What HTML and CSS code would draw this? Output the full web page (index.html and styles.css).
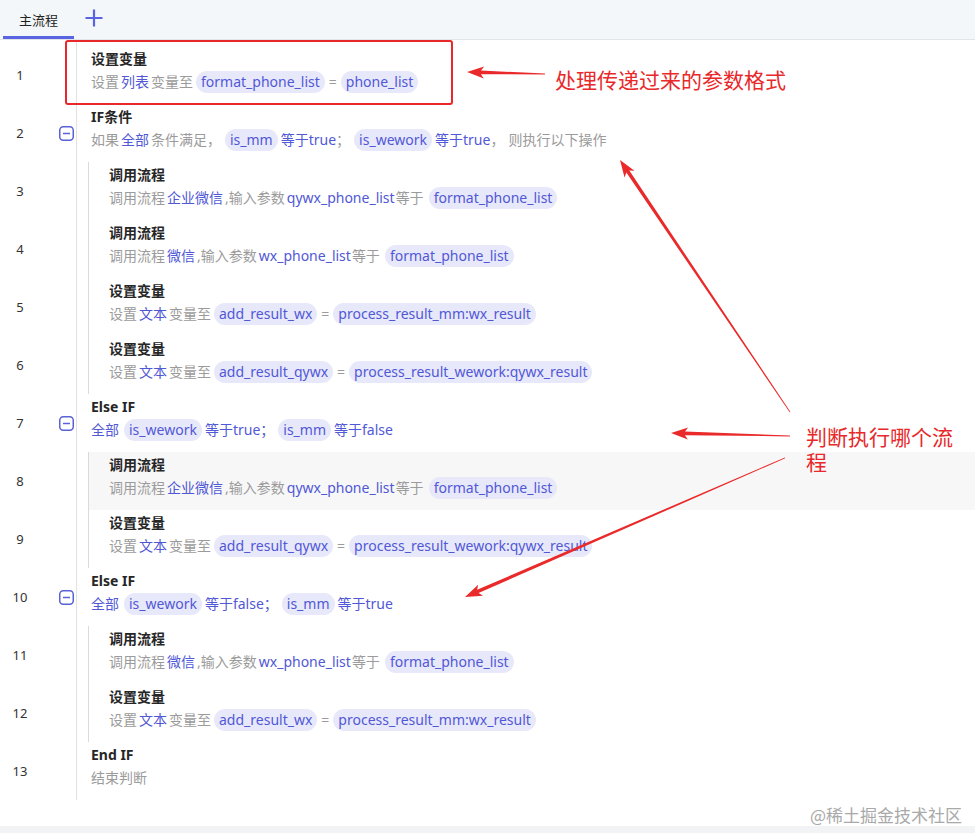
FILE: index.html
```html
<!DOCTYPE html>
<html lang="zh">
<head>
<meta charset="utf-8">
<title>主流程</title>
<link rel="stylesheet" href="styles.css">
</head>
<body>
<div class="page">
  <div class="tabs">
    <div class="tab active">主流程</div>
    <div class="add">
      <svg width="18" height="18" viewBox="0 0 18 18"><path d="M9 0.5v17M0.5 9h17" stroke="#5864e0" stroke-width="2.2" fill="none"/></svg>
    </div>
  </div>
  <div class="main">
    <div class="list">
      <div class="row">
        <div class="gutter"><span class="num">1</span></div>
        <div class="content l0">
          <div class="title">设置变量</div>
          <div class="desc">设置<span class="kw">列表</span>变量至<span class="chip">format_phone_list</span><span class="eq">=</span><span class="chip">phone_list</span></div>
        </div>
      </div>
      <div class="row">
        <div class="gutter"><span class="num">2</span><span class="toggle"><svg width="15" height="15" viewBox="0 0 15 15"><rect x="0.75" y="0.75" width="13.5" height="13.5" rx="3.5" fill="none" stroke="#5a62d8" stroke-width="1.5"/><path d="M4 7.5h7" stroke="#5a62d8" stroke-width="1.5"/></svg></span></div>
        <div class="content l0">
          <div class="title">IF条件</div>
          <div class="desc">如果<span class="kw">全部</span>条件满足，<span class="chip sp">is_mm</span><span class="kw0">等于true</span>；<span class="chip sp">is_wework</span><span class="kw0">等于true</span>，<span class="tail">则执行以下操作</span></div>
        </div>
      </div>
      <div class="row">
        <div class="gutter"><span class="num">3</span></div>
        <div class="content l1">
          <div class="title">调用流程</div>
          <div class="desc">调用流程<span class="kw">企业微信</span>,输入参数<span class="kw0 pad">qywx_phone_list</span>等于<span class="chip wide">format_phone_list</span></div>
        </div>
      </div>
      <div class="row">
        <div class="gutter"><span class="num">4</span></div>
        <div class="content l1">
          <div class="title">调用流程</div>
          <div class="desc">调用流程<span class="kw">微信</span>,输入参数<span class="kw0 pad">wx_phone_list</span>等于<span class="chip wide">format_phone_list</span></div>
        </div>
      </div>
      <div class="row">
        <div class="gutter"><span class="num">5</span></div>
        <div class="content l1">
          <div class="title">设置变量</div>
          <div class="desc">设置<span class="kw">文本</span>变量至<span class="chip">add_result_wx</span><span class="eq">=</span><span class="chip">process_result_mm:wx_result</span></div>
        </div>
      </div>
      <div class="row">
        <div class="gutter"><span class="num">6</span></div>
        <div class="content l1">
          <div class="title">设置变量</div>
          <div class="desc">设置<span class="kw">文本</span>变量至<span class="chip">add_result_qywx</span><span class="eq">=</span><span class="chip">process_result_wework:qywx_result</span></div>
        </div>
      </div>
      <div class="row">
        <div class="gutter"><span class="num">7</span><span class="toggle"><svg width="15" height="15" viewBox="0 0 15 15"><rect x="0.75" y="0.75" width="13.5" height="13.5" rx="3.5" fill="none" stroke="#5a62d8" stroke-width="1.5"/><path d="M4 7.5h7" stroke="#5a62d8" stroke-width="1.5"/></svg></span></div>
        <div class="content l0">
          <div class="title">Else IF</div>
          <div class="desc blue"><span class="kw first">全部</span><span class="chip">is_wework</span>等于true；<span class="chip sp">is_mm</span>等于false</div>
        </div>
      </div>
      <div class="row">
        <div class="gutter"><span class="num">8</span></div>
        <div class="content l1 hover">
          <div class="title">调用流程</div>
          <div class="desc">调用流程<span class="kw">企业微信</span>,输入参数<span class="kw0 pad">qywx_phone_list</span>等于<span class="chip wide">format_phone_list</span></div>
        </div>
      </div>
      <div class="row">
        <div class="gutter"><span class="num">9</span></div>
        <div class="content l1">
          <div class="title">设置变量</div>
          <div class="desc">设置<span class="kw">文本</span>变量至<span class="chip">add_result_qywx</span><span class="eq">=</span><span class="chip">process_result_wework:qywx_result</span></div>
        </div>
      </div>
      <div class="row">
        <div class="gutter"><span class="num">10</span><span class="toggle"><svg width="15" height="15" viewBox="0 0 15 15"><rect x="0.75" y="0.75" width="13.5" height="13.5" rx="3.5" fill="none" stroke="#5a62d8" stroke-width="1.5"/><path d="M4 7.5h7" stroke="#5a62d8" stroke-width="1.5"/></svg></span></div>
        <div class="content l0">
          <div class="title">Else IF</div>
          <div class="desc blue"><span class="kw first">全部</span><span class="chip">is_wework</span>等于false；<span class="chip sp">is_mm</span>等于true</div>
        </div>
      </div>
      <div class="row">
        <div class="gutter"><span class="num">11</span></div>
        <div class="content l1">
          <div class="title">调用流程</div>
          <div class="desc">调用流程<span class="kw">微信</span>,输入参数<span class="kw0 pad">wx_phone_list</span>等于<span class="chip wide">format_phone_list</span></div>
        </div>
      </div>
      <div class="row">
        <div class="gutter"><span class="num">12</span></div>
        <div class="content l1">
          <div class="title">设置变量</div>
          <div class="desc">设置<span class="kw">文本</span>变量至<span class="chip">add_result_wx</span><span class="eq">=</span><span class="chip">process_result_mm:wx_result</span></div>
        </div>
      </div>
      <div class="row">
        <div class="gutter"><span class="num">13</span></div>
        <div class="content l0">
          <div class="title">End IF</div>
          <div class="desc">结束判断</div>
        </div>
      </div>
    </div>
  </div>
  <div class="footer-strip"></div>

  <div class="anno-box"></div>
  <div class="anno-text t1">处理传递过来的参数格式</div>
  <div class="anno-text t2">判断执行哪个流程</div>
  <svg class="anno-svg" width="975" height="833" viewBox="0 0 975 833">
    <g fill="#ea2a2a">
      <polygon transform="translate(467,72) rotate(1.5)" points="0,0 17,-6 14,-1.8 78,-0.5 78,0.5 14,1.8 17,6"/>
      <polygon transform="translate(620,160) rotate(56)" points="0,0 17,-6 14,-1.8 304,-0.4 304,0.4 14,1.8 17,6"/>
      <polygon transform="translate(671,433) rotate(1.4)" points="0,0 17,-6 14,-1.8 119,-0.5 119,0.5 14,1.8 17,6"/>
      <polygon transform="translate(465,597) rotate(-23.5)" points="0,0 17,-6 14,-1.8 349,-0.4 349,0.4 14,1.8 17,6"/>
    </g>
  </svg>
  <div class="watermark">@稀土掘金技术社区</div>
</div>
</body>
</html>
```

FILE: styles.css
```css
* { box-sizing: border-box; }
html, body { margin: 0; padding: 0; }
body {
  font-family: "Noto Sans", "Noto Sans CJK SC", sans-serif;
  background: #ffffff;
  color: #262626;
}
.page {
  position: relative;
  width: 975px;
  height: 833px;
  overflow: hidden;
}
.tabs {
  height: 40px;
  display: flex;
  align-items: stretch;
  padding-left: 3px;
  background: #f4f7f9;
  border-bottom: 1px solid #e1e5ea;
}
.tab {
  width: 71px;
  font-size: 13px;
  line-height: 16px;
  padding-top: 12px;
  text-align: center;
  color: #222;
}
.tab.active { border-bottom: 3px solid #5864e0; }
.add {
  display: flex;
  align-items: center;
  padding-left: 11px;
  padding-bottom: 4px;
}
.add svg { display: block; }
.main {
  height: 786px;
  background: #fff;
}
.list {
  padding-top: 6px;
  height: 760px;
  background: linear-gradient(#e2e2e2, #e2e2e2) 76px 0 / 1px 100% no-repeat;
}
.row {
  display: flex;
  height: 58px;
}
.gutter {
  width: 77px;
  flex: none;
  display: flex;
  align-items: center;
}
.num {
  width: 40px;
  text-align: center;
  font-size: 13px;
  color: #333;
}
.toggle {
  margin-left: 19px;
  display: flex;
  padding-top: 1px;
}
.toggle svg { display: block; }
.content {
  flex: 1;
  padding-top: 2px;
  min-width: 0;
}
.content.l0 { padding-left: 14px; }
.content.l1 {
  margin-left: 11px;
  border-left: 1px solid #dadada;
  padding-left: 20px;
}
.content.hover { background: #f7f7f8; }
.title {
  font-size: 14px;
  line-height: 22px;
  font-weight: 700;
  color: #262626;
}
.desc {
  margin-top: 1px;
  font-size: 14px;
  line-height: 22px;
  color: #9b9b9b;
  white-space: nowrap;
}
.desc.blue { color: #5158d6; }
.kw { color: #5158d6; margin: 0 2px; }
.kw.first { margin-left: 0; }
.kw0 { color: #5158d6; }
.kw0.pad { margin: 0 1px 0 2px; }
.chip {
  display: inline-block;
  line-height: 22px;
  padding: 0 5px;
  margin: 0 3px;
  border-radius: 11px;
  background: #e8e8fb;
  color: #5158d6;
}
.chip.sp { margin-left: 4px; }
.chip.wide { margin-left: 5px; }
.eq { margin: 0 1px; color: #9b9b9b; }
.tail { margin-left: 4px; }
.footer-strip {
  height: 7px;
  background: #f1f3f5;
}
.anno-box {
  position: absolute;
  left: 65px;
  top: 40px;
  width: 388px;
  height: 65px;
  border: 2.5px solid #e8282a;
  border-radius: 3px;
}
.anno-text {
  position: absolute;
  font-family: "Noto Sans CJK SC", sans-serif;
  font-size: 21px;
  line-height: 25px;
  color: #e8282a;
}
.anno-text.t1 { left: 555px; top: 67px; white-space: nowrap; }
.anno-text.t2 { left: 806px; top: 424px; width: 152px; }
.anno-svg {
  position: absolute;
  left: 0;
  top: 0;
  pointer-events: none;
}
.watermark {
  position: absolute;
  left: 810px;
  top: 804px;
  font-family: "Noto Sans CJK SC", sans-serif;
  font-size: 17px;
  line-height: 22px;
  color: #a9a9a9;
  white-space: nowrap;
}
```
